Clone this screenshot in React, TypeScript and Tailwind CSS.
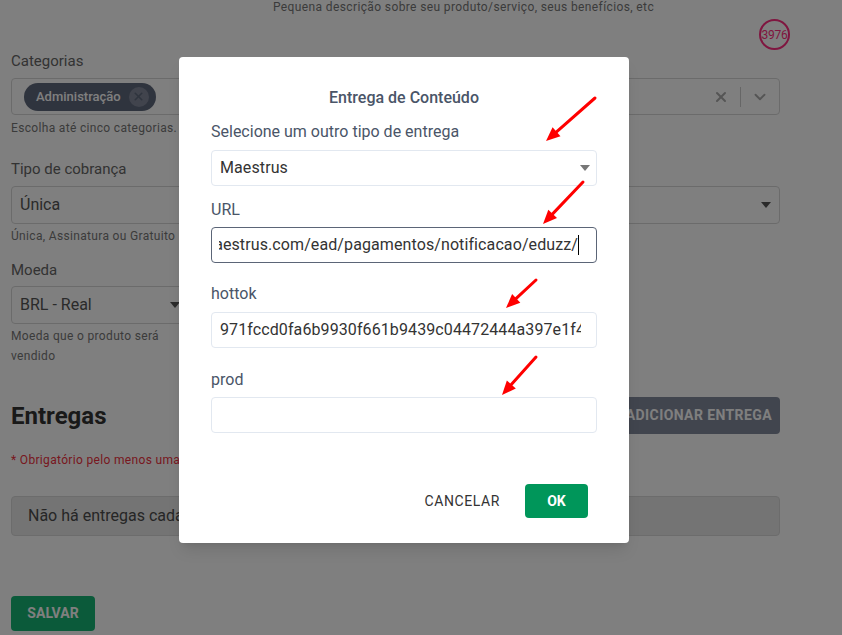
import { ChevronDown, X } from "lucide-react";

const arrows = [
  { x1: 595, y1: 98, x2: 546, y2: 141 },
  { x1: 583, y1: 182, x2: 543, y2: 224 },
  { x1: 536, y1: 280, x2: 506, y2: 308 },
  { x1: 536, y1: 357, x2: 502, y2: 395 },
];

function Arrow({ x1, y1, x2, y2 }: { x1: number; y1: number; x2: number; y2: number }) {
  const dx = x2 - x1;
  const dy = y2 - y1;
  const len = Math.hypot(dx, dy);
  const ux = dx / len;
  const uy = dy / len;
  const bx = x2 - ux * 14;
  const by = y2 - uy * 14;
  const nx = -uy * 6;
  const ny = ux * 6;
  return (
    <g>
      <line x1={x1} y1={y1} x2={bx} y2={by} stroke="#ff0000" strokeWidth={3} strokeLinecap="round" />
      <polygon points={`${x2},${y2} ${bx + nx},${by + ny} ${bx - nx},${by - ny}`} fill="#ff0000" />
    </g>
  );
}

function Caret({ className }: { className: string }) {
  return (
    <svg width="10" height="6" viewBox="0 0 10 6" className={className}>
      <path d="M0 0h10L5 6z" fill="currentColor" />
    </svg>
  );
}

export default function App() {
  return (
    <div className="relative h-[635px] w-[842px] overflow-hidden bg-white font-['Roboto',sans-serif]">
      {/* Page behind the modal */}
      <div className="ml-[11px] flex w-[769px] flex-col">
        <p className="ml-[262px] text-[12px] leading-[14px] tracking-[0.38px] text-[#777]">
          Pequena descrição sobre seu produto/serviço, seus benefícios, etc
        </p>
        <div className="mt-[5px] flex justify-end">
          <div className="-mr-[10px] flex h-[31px] w-[31px] items-center justify-center rounded-full border-2 border-[#ff2d80] text-[12px] tracking-tight text-[#ff2d80]">
            3976
          </div>
        </div>

        <label className="mt-[1px] text-[15px] leading-[20px] text-[#666]">Categorias</label>
        <div className="mt-[7px] flex h-[37px] items-center rounded border border-[#d6d6d6] pl-[12px] pr-[10px]">
          <span className="flex h-[28px] items-center gap-[8px] rounded-full bg-[#5f687c] pl-[12px] pr-[7px] text-[13px] font-medium text-white">
            Administração
            <span className="flex h-[20px] w-[20px] items-center justify-center rounded-full bg-[#82899b]">
              <X className="h-[13px] w-[13px] text-[#5f687c]" strokeWidth={3} />
            </span>
          </span>
          <div className="ml-auto flex items-center">
            <X className="h-[16px] w-[16px] text-[#aaa]" strokeWidth={3} />
            <span className="ml-[11px] h-[20px] w-px bg-[#ccc]" />
            <ChevronDown className="ml-[10px] h-[18px] w-[18px] text-[#aaa]" strokeWidth={2.5} />
          </div>
        </div>
        <p className="mt-[4px] text-[12px] leading-[18px] tracking-[0.33px] text-[#777]">Escolha até cinco categorias.</p>

        <label className="mt-[22px] text-[15px] leading-[20px] text-[#666]">Tipo de cobrança</label>
        <div className="mt-[7px] flex h-[38px] items-center rounded border border-[#d6d6d6] pl-[8px] pr-[8px] text-[16px] text-[#555]">
          Única
          <Caret className="ml-auto text-[#555]" />
        </div>
        <p className="mt-[3px] text-[12px] leading-[18px] tracking-[0.33px] text-[#777]">Única, Assinatura ou Gratuito</p>

        <label className="mt-[15px] text-[15px] leading-[20px] text-[#666]">Moeda</label>
        <div className="mt-[6px] flex h-[38px] w-[178px] items-center rounded border border-[#d6d6d6] pl-[8px] pr-[8px] text-[16px] text-[#555]">
          BRL - Real
          <Caret className="ml-auto text-[#555]" />
        </div>
        <p className="mt-[2px] w-[178px] text-[12px] leading-[20px] tracking-[0.33px] text-[#777]">Moeda que o produto será vendido</p>

        <div className="mt-[31px] flex h-[37px] items-center justify-between">
          <h2 className="text-[24px] font-bold text-[#333]">Entregas</h2>
          <button className="h-[37px] rounded bg-[#838a9c] pl-[10px] pr-[8px] text-[14px] font-bold tracking-[0.4px] text-white">
            ADICIONAR ENTREGA
          </button>
        </div>
        <p className="mt-[17px] text-[12px] leading-[18px] tracking-[0.33px] text-[#f03040]">
          * Obrigatório pelo menos uma entrega
        </p>

        <div className="mt-[27px] flex h-[40px] items-center rounded border border-[#d9d9d9] bg-[#e8e8e8] pl-[16px] text-[16px] text-[#4c4c4c]">
          Não há entregas cadastradas
        </div>

        <button className="mt-[60px] h-[35px] w-[84px] rounded bg-[#17b474] text-[14px] font-bold text-white">
          SALVAR
        </button>
      </div>

      {/* Backdrop + modal */}
      <div className="absolute inset-0 bg-black/50 pl-[179px] pt-[57px]">
        <div className="flex w-[450px] flex-col rounded bg-white px-[32px] pb-[25px] pt-[31px] shadow-lg">
          <h3 className="text-center text-[16px] font-medium leading-[20px] text-[#4a5568]">
            Entrega de Conteúdo
          </h3>

          <label className="mt-[14px] text-[16px] leading-[20px] text-[#4a5568]">Selecione um outro tipo de entrega</label>
          <div className="mt-[8px] flex h-[36px] items-center rounded border border-[#e2e8f0] pl-[8px] pr-[6px] text-[16px] tracking-[0.1px] text-[#333]">
            Maestrus
            <Caret className="ml-auto text-[#777]" />
          </div>

          <label className="mt-[14px] text-[16px] leading-[20px] text-[#4a5568]">URL</label>
          <div className="mt-[7px] flex h-[36px] items-center rounded border border-[#5b6577] pl-[7px] pr-[17px] text-[16px] tracking-[0.1px] text-[#333]">
            <div className="flex min-w-0 flex-1 justify-end overflow-hidden whitespace-nowrap">
              <span className="shrink-0">https://www.maestrus.com/ead/pagamentos/notificacao/eduzz/</span>
            </div>
            <span className="h-[20px] w-px bg-black" />
          </div>

          <label className="mt-[21px] text-[16px] leading-[20px] text-[#4a5568]">hottok</label>
          <div className="mt-[8px] flex h-[36px] items-center rounded border border-[#e2e8f0] pl-[8px] pr-[15px] text-[16px] tracking-[0.1px] text-[#333]">
            <div className="min-w-0 flex-1 overflow-hidden whitespace-nowrap">
              971fccd0fa6b9930f661b9439c04472444a397e1f4b2c8
            </div>
          </div>

          <label className="mt-[22px] text-[16px] leading-[20px] text-[#4a5568]">prod</label>
          <div className="mt-[7px] h-[36px] rounded border border-[#e2e8f0]" />

          <div className="mt-[51px] flex items-center justify-end pr-[9px]">
            <button className="mr-[25px] text-[14px] font-normal tracking-[0.6px] text-[#333]">CANCELAR</button>
            <button className="h-[34px] w-[63px] rounded bg-[#00965a] text-[14px] font-bold text-white">OK</button>
          </div>
        </div>
      </div>

      {/* Annotation arrows */}
      <svg className="pointer-events-none absolute inset-0" width="842" height="635">
        {arrows.map((a, i) => (
          <Arrow key={i} {...a} />
        ))}
      </svg>
    </div>
  );
}
